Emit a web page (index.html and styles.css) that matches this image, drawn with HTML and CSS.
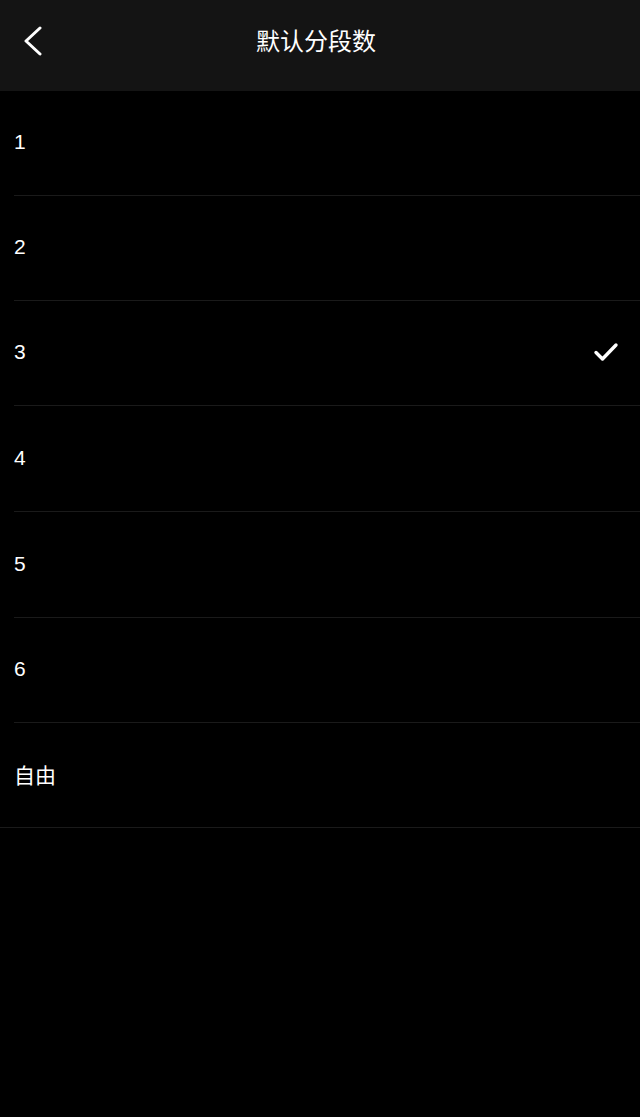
FILE: index.html
```html
<!DOCTYPE html>
<html lang="zh-CN">
<head>
    <meta charset="UTF-8">
    <meta name="viewport" content="width=device-width, initial-scale=1.0">
    <title>默认分段数</title>
    <link rel="stylesheet" href="styles.css">
</head>
<body>
    <div class="cabecera">
        <button class="atras" aria-label="返回">
            <svg width="22" height="30" viewBox="0 0 22 30">
                <path d="M19 2 L5 15 L19 28" fill="none" stroke="#fff" stroke-width="3" stroke-linecap="round" stroke-linejoin="round"/>
            </svg>
        </button>
        <h1>默认分段数</h1>
    </div>

    <ul class="lista">
        <li class="fila">1</li>
        <li class="fila">2</li>
        <li class="fila activa">3
            <svg class="marca" width="26" height="22" viewBox="0 0 26 22">
                <path d="M3 11.5 L9.5 18 L23 4" fill="none" stroke="#fff" stroke-width="3.4" stroke-linecap="round" stroke-linejoin="round"/>
            </svg>
        </li>
        <li class="fila alta">4</li>
        <li class="fila alta">5</li>
        <li class="fila">6</li>
        <li class="fila ultima">自由</li>
    </ul>
</body>
</html>
```

FILE: styles.css
```css
body {
    font-family: "Liberation Sans", "Noto Sans CJK SC", sans-serif;
    background-color: #000;
    color: #fff;
    margin: 0;
    padding: 0;
}
.cabecera {
    height: 91px;
    background-color: #141414;
    display: flex;
    align-items: center;
    justify-content: center;
    position: relative;
}
.cabecera h1 {
    margin: 0 8px 12px 0;
    font-family: "Noto Sans CJK SC", sans-serif;
    font-size: 24px;
    font-weight: 400;
}
.atras {
    position: absolute;
    left: 21px;
    top: 26px;
    background: none;
    border: none;
    padding: 0;
    cursor: pointer;
}
.lista {
    list-style: none;
    margin: 0;
    padding: 0;
}
.fila {
    height: 105px;
    margin-left: 14px;
    display: flex;
    align-items: center;
    justify-content: space-between;
    padding-right: 21px;
    padding-bottom: 2px;
    box-sizing: border-box;
    border-bottom: 1px solid #1a1a1a;
    font-size: 21px;
}
.alta {
    height: 106px;
}
.ultima {
    margin-left: 0;
    padding-left: 14px;
    font-family: "Noto Sans CJK SC", sans-serif;
    font-size: 21px;
}
.marca {
    display: block;
}
```
